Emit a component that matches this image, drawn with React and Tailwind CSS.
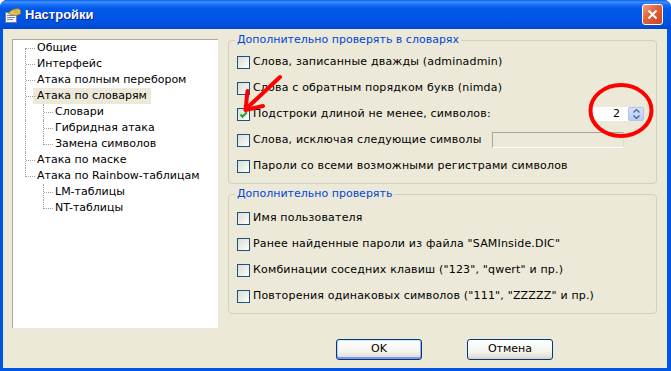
import React from "react";

function Check({ checked }) {
  return (
    <span className="flex h-[13px] w-[13px] shrink-0 items-center justify-center border border-[#1c5180] bg-[linear-gradient(135deg,#dcdcd7_0%,#eeeee8_55%,#ffffff_100%)]">
      {checked && (
        <svg width="11" height="11" viewBox="0 0 11 11">
          <path d="M2.5 5.5 L4.5 7.8 L8.8 3.2" fill="none" stroke="#21a121" strokeWidth="2" />
        </svg>
      )}
    </span>
  );
}

function CheckRow({ label, checked, children }) {
  return (
    <div className="flex h-[26px] items-center gap-[3px]">
      <Check checked={checked} />
      <span className="whitespace-nowrap tracking-[0.18px]">{label}</span>
      {children}
    </div>
  );
}

function TreeRow({ label, cells, selected }) {
  return (
    <div className="flex h-[16px] items-stretch">
      {cells.map((c, i) => (
        <div key={i} className="relative w-[18px] shrink-0">
          {c !== "none" && (
            <div
              className={
                "absolute left-[8px] w-0 border-l border-dotted border-[#a0a0a0] " +
                (c === "first" ? "top-[8px] bottom-0" : c === "last" ? "top-0 h-[9px]" : "top-0 bottom-0")
              }
            />
          )}
          {c !== "none" && c !== "pass" && (
            <div className="absolute left-[9px] right-0 top-[8px] h-0 border-t border-dotted border-[#a0a0a0]" />
          )}
        </div>
      ))}
      <div className={"-ml-[2px] flex items-center whitespace-nowrap px-[4px] " + (selected ? "bg-[#ece9d8]" : "")}>
        {label}
      </div>
    </div>
  );
}

function TitleIcon() {
  return (
    <svg width="16" height="16" viewBox="0 0 16 16">
      <rect x="0.5" y="5.5" width="11" height="10" fill="#f6f6f6" stroke="#6f7f9f" />
      <rect x="2" y="8" width="8" height="1" fill="#7088c0" />
      <rect x="2" y="10" width="8" height="1" fill="#7088c0" />
      <rect x="2" y="12" width="6" height="1" fill="#7088c0" />
      <path d="M3 6 L8 2.5 L13 1.5 L15.5 3 L15.5 7 L11 8.5 L7 8 Z" fill="#e9c45a" stroke="#9a7420" strokeWidth="0.8" />
      <path d="M8 4 L13 3 M9 6 L14 5" stroke="#c79b35" strokeWidth="0.8" />
    </svg>
  );
}

export default function App() {
  return (
    <div className="relative h-[371px] w-[671px] bg-white font-['DejaVu_Sans',sans-serif] text-[11px] text-black">
      <div className="flex h-full flex-col overflow-hidden rounded-t-[7px] bg-[#0055e5]">
        {/* Title bar */}
        <div className="flex h-[29px] shrink-0 items-center bg-[linear-gradient(to_bottom,#0a5fee_0%,#3d91fb_7%,#1b6ff5_16%,#0058ea_30%,#0055e5_70%,#004ed9_90%,#0045cf_100%)] pl-[5px] pr-[8px]">
          <TitleIcon />
          <span className="ml-[4px] pt-[1px] font-['Liberation_Sans',sans-serif] text-[13px] font-bold text-white [text-shadow:1px_1px_0_#0a1b8a]">
            Настройки
          </span>
          <div className="ml-auto flex h-[21px] w-[21px] items-center justify-center rounded-[3px] border border-white bg-[linear-gradient(135deg,#f0a080_0%,#e0603a_45%,#c84520_100%)]">
            <svg width="11" height="11" viewBox="0 0 11 11">
              <path d="M1.5 1.5 L9.5 9.5 M9.5 1.5 L1.5 9.5" stroke="white" strokeWidth="2" />
            </svg>
          </div>
        </div>

        {/* Body */}
        <div className="mb-[3px] ml-[3px] mr-[4px] flex flex-1 flex-col bg-[#ece9d8] pl-[9px] pr-[10px]">
          <div className="flex items-start">
            {/* Tree */}
            <div className="mt-[10px] h-[289px] w-[206px] shrink-0 border-l border-t border-[#aca899] bg-white pl-[4px] pt-0">
              <TreeRow label="Общие" cells={["first"]} />
              <TreeRow label="Интерфейс" cells={["tee"]} />
              <TreeRow label="Атака полным перебором" cells={["tee"]} />
              <TreeRow label="Атака по словарям" cells={["tee"]} selected />
              <TreeRow label="Словари" cells={["pass", "tee"]} />
              <TreeRow label="Гибридная атака" cells={["pass", "tee"]} />
              <TreeRow label="Замена символов" cells={["pass", "last"]} />
              <TreeRow label="Атака по маске" cells={["tee"]} />
              <TreeRow label="Атака по Rainbow-таблицам" cells={["last"]} />
              <TreeRow label="LM-таблицы" cells={["none", "tee"]} />
              <TreeRow label="NT-таблицы" cells={["none", "last"]} />
            </div>

            {/* Groups */}
            <div className="ml-[10px] flex w-[429px] shrink-0 flex-col pt-[4px]">
              <fieldset className="rounded-[4px] border border-[#d0d0bf] pb-[4px] pl-[8px]">
                <legend className="-ml-[2px] px-[2px] leading-[14px] text-[#0046d5]">
                  Дополнительно проверять в словарях
                </legend>
                <div className="flex flex-col pt-[2px]">
                  <CheckRow label="Слова, записанные дважды (adminadmin)" />
                  <CheckRow label="Слова с обратным порядком букв (nimda)" />
                  <CheckRow label="Подстроки длиной не менее, символов:" checked>
                    <div className="ml-auto mr-[12px] flex h-[14px] shrink-0">
                      <div className="flex w-[36px] items-center justify-end bg-white pr-[8px]">2</div>
                      <div className="flex w-[16px] flex-col items-center justify-center gap-[2px] rounded-[2px] border border-[#b3c5ef] bg-[linear-gradient(to_bottom,#d4e0fd,#b9cbf7)]">
                        <svg width="7" height="4" viewBox="0 0 7 4">
                          <path d="M0.5 3.5 L3.5 0.5 L6.5 3.5" fill="none" stroke="#4d6185" strokeWidth="1.2" />
                        </svg>
                        <svg width="7" height="4" viewBox="0 0 7 4">
                          <path d="M0.5 0.5 L3.5 3.5 L6.5 0.5" fill="none" stroke="#4d6185" strokeWidth="1.2" />
                        </svg>
                      </div>
                    </div>
                  </CheckRow>
                  <CheckRow label="Слова, исключая следующие символы">
                    <div className="ml-auto mr-[32px] h-[16px] w-[132px] shrink-0 border border-b-white border-l-[#a5a5a0] border-r-[#dcdcd4] border-t-[#a5a5a0]" />
                  </CheckRow>
                  <CheckRow label="Пароли со всеми возможными регистрами символов" />
                </div>
              </fieldset>

              <fieldset className="mt-[3px] rounded-[4px] border border-[#d0d0bf] pb-[4px] pl-[8px]">
                <legend className="-ml-[2px] px-[2px] leading-[14px] text-[#0046d5]">Дополнительно проверять</legend>
                <div className="flex flex-col pt-[4px]">
                  <CheckRow label="Имя пользователя" />
                  <CheckRow label='Ранее найденные пароли из файла "SAMInside.DIC"' />
                  <CheckRow label='Комбинации соседних клавиш ("123", "qwert" и пр.)' />
                  <CheckRow label='Повторения одинаковых символов ("111", "ZZZZZ" и пр.)' />
                </div>
              </fieldset>
            </div>
          </div>

          {/* Buttons */}
          <div className="mt-[11px] flex gap-[45px] pl-[324px]">
            <button className="flex h-[21px] w-[86px] items-center justify-center rounded-[3px] border border-[#003c74] bg-[linear-gradient(to_bottom,#ffffff_0%,#f4f4f0_60%,#e6e3da_85%,#d6d0c5_100%)] shadow-[inset_0_1px_0_#cee7ff,inset_0_-2px_0_#7c95ee,inset_1px_0_0_#b4cdf8,inset_-1px_0_0_#95afef]">
              OK
            </button>
            <button className="flex h-[21px] w-[86px] items-center justify-center rounded-[3px] border border-[#003c74] bg-[linear-gradient(to_bottom,#ffffff_0%,#f4f4f0_60%,#e6e3da_85%,#d6d0c5_100%)]">
              Отмена
            </button>
          </div>
        </div>
      </div>

      {/* Red annotations */}
      <svg className="pointer-events-none absolute left-0 top-0" width="671" height="371" viewBox="0 0 671 371">
        <path d="M280 77 L246 109" stroke="#ff0000" strokeWidth="4" strokeLinecap="round" fill="none" />
        <path d="M247.5 91 L245.5 110 L263 106" stroke="#ff0000" strokeWidth="4" strokeLinecap="round" strokeLinejoin="round" fill="none" />
        <ellipse cx="621" cy="110.5" rx="30.5" ry="25.5" stroke="#ff0000" strokeWidth="4" fill="none" />
      </svg>
    </div>
  );
}
